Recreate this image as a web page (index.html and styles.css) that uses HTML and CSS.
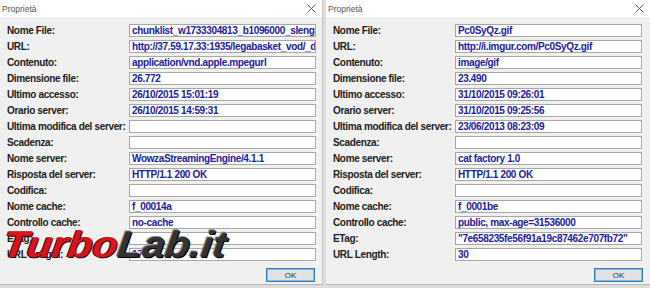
FILE: index.html
```html
<!DOCTYPE html>
<html lang="it">
<head>
  <meta charset="UTF-8">
  <title>Proprietà</title>
  <link rel="stylesheet" href="styles.css">
</head>
<body>
  <div class="desk">
    <div class="dialog">
      <div class="titlebar">
        <span class="title">Proprietà</span>
        <svg class="close" width="9" height="9" viewBox="0 0 9 9"><path d="M0.5 0.5L8.5 8.5M8.5 0.5L0.5 8.5" stroke="#555" stroke-width="1"/></svg>
      </div>
      <div class="props">
        <span class="label">Nome File:</span><span class="value">chunklist_w1733304813_b1096000_sleng.m3u8</span>
        <span class="label">URL:</span><span class="value">http://37.59.17.33:1935/legabasket_vod/_definst_/mp4:partite/chunklist.m3u8</span>
        <span class="label">Contenuto:</span><span class="value">application/vnd.apple.mpegurl</span>
        <span class="label">Dimensione file:</span><span class="value">26.772</span>
        <span class="label">Ultimo accesso:</span><span class="value">26/10/2015 15:01:19</span>
        <span class="label">Orario server:</span><span class="value">26/10/2015 14:59:31</span>
        <span class="label">Ultima modifica del server:</span><span class="value"></span>
        <span class="label">Scadenza:</span><span class="value"></span>
        <span class="label">Nome server:</span><span class="value">WowzaStreamingEngine/4.1.1</span>
        <span class="label">Risposta del server:</span><span class="value">HTTP/1.1 200 OK</span>
        <span class="label">Codifica:</span><span class="value"></span>
        <span class="label">Nome cache:</span><span class="value">f_00014a</span>
        <span class="label">Controllo cache:</span><span class="value">no-cache</span>
        <span class="label">ETag:</span><span class="value"></span>
        <span class="label">URL Length:</span><span class="value">176</span>
      </div>
      <div class="actions"><button class="ok">OK</button></div>
    </div>

    <div class="dialog">
      <div class="titlebar">
        <span class="title">Proprietà</span>
        <svg class="close" width="9" height="9" viewBox="0 0 9 9"><path d="M0.5 0.5L8.5 8.5M8.5 0.5L0.5 8.5" stroke="#555" stroke-width="1"/></svg>
      </div>
      <div class="props">
        <span class="label">Nome File:</span><span class="value">Pc0SyQz.gif</span>
        <span class="label">URL:</span><span class="value">http://i.imgur.com/Pc0SyQz.gif</span>
        <span class="label">Contenuto:</span><span class="value">image/gif</span>
        <span class="label">Dimensione file:</span><span class="value">23.490</span>
        <span class="label">Ultimo accesso:</span><span class="value">31/10/2015 09:26:01</span>
        <span class="label">Orario server:</span><span class="value">31/10/2015 09:25:56</span>
        <span class="label">Ultima modifica del server:</span><span class="value">23/06/2013 08:23:09</span>
        <span class="label">Scadenza:</span><span class="value"></span>
        <span class="label">Nome server:</span><span class="value">cat factory 1.0</span>
        <span class="label">Risposta del server:</span><span class="value">HTTP/1.1 200 OK</span>
        <span class="label">Codifica:</span><span class="value"></span>
        <span class="label">Nome cache:</span><span class="value">f_0001be</span>
        <span class="label">Controllo cache:</span><span class="value">public, max-age=31536000</span>
        <span class="label">ETag:</span><span class="value">"7e658235fe56f91a19c87462e707fb72"</span>
        <span class="label">URL Length:</span><span class="value">30</span>
      </div>
      <div class="actions"><button class="ok">OK</button></div>
    </div>
  </div>

  <div class="watermark"><span class="turbo">Turbo</span><span class="lab">Lab.it</span></div>
</body>
</html>
```

FILE: styles.css
```css
body {
  margin: 0;
  padding: 0;
  width: 650px;
  height: 288px;
  overflow: hidden;
  background: #dcdcdc;
  position: relative;
}

.desk {
  display: flex;
  gap: 3px;
  height: 285px;
}

.dialog {
  width: 323px;
  background: #f0f0f0;
  border-right: 1px solid #c4c4c4;
  border-bottom: 1px solid #b5b5b5;
  box-sizing: border-box;
  display: flex;
  flex-direction: column;
}

.dialog:last-child {
  width: 324px;
  border-right: none;
}

.titlebar {
  height: 17px;
  background: #fff;
  display: flex;
  align-items: center;
  justify-content: space-between;
  padding: 0 6px 0 2px;
}

.title {
  font-family: "Liberation Sans", Arial, sans-serif;
  font-size: 8.5px;
  color: #555;
}

.close {
  display: block;
}

.props {
  display: grid;
  grid-template-columns: 122px 187px;
  grid-auto-rows: 13px;
  row-gap: 3px;
  padding: 7px 0 0 7px;
  font-family: "Liberation Sans", Arial, sans-serif;
  font-weight: bold;
  font-size: 10px;
  letter-spacing: -0.35px;
}

.label {
  color: #1c1c1c;
  line-height: 13px;
  white-space: nowrap;
}

.value {
  background: #fff;
  border: 1px solid #a8a8a8;
  color: #2020a4;
  line-height: 11px;
  padding: 0 2px;
  white-space: nowrap;
  overflow: hidden;
}

.actions {
  display: flex;
  justify-content: flex-end;
  padding: 7px 7px 0 0;
}

.ok {
  width: 49px;
  height: 14px;
  margin: 0;
  padding: 0;
  background: #e1e1e1;
  border: 1px solid #2f7bc4;
  box-shadow: inset 0 0 0 1px #8fb8df;
  font-family: "Liberation Sans", Arial, sans-serif;
  font-size: 8px;
  color: #333;
}

.watermark {
  position: absolute;
  left: 6px;
  top: 225px;
  font-family: "Liberation Sans", Arial, sans-serif;
  font-weight: bold;
  font-style: italic;
  font-size: 37px;
  line-height: 40px;
  white-space: nowrap;
  transform-origin: left top;
  transform: skewX(-8deg) scaleX(1.1);
}

.turbo {
  color: #d8141c;
  text-shadow: 1px 1px 0 #2a0000, -1px 0 0 #5a0000;
}

.lab {
  color: #333;
  text-shadow: 1px 1px 0 #000, -1px -1px 0 #888;
}
```
